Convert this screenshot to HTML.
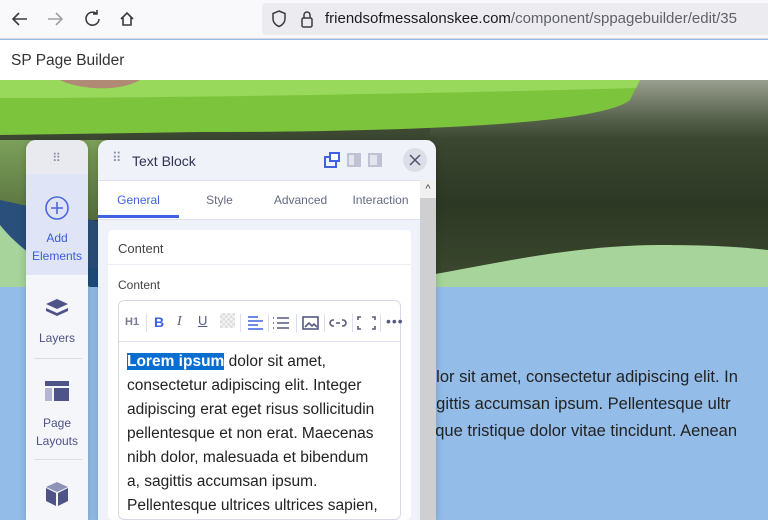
<!DOCTYPE html><html><head><style>
*{margin:0;padding:0;box-sizing:border-box}
body{width:768px;height:510px;overflow:hidden;position:relative;font-family:"Liberation Sans",sans-serif;background:#93bde8}
.abs{position:absolute}
</style></head><body>
<div class="abs" style="left:0;top:0;width:768px;height:39px;background:#f9f9fb;border-bottom:1px solid #d8d8dc"></div>
<svg class="abs" style="left:0;top:0" width="140" height="39" fill="none" stroke="#3b3b3f" stroke-width="1.6">
<path d="M27 19H13M19 13l-6 6 6 6"/>
<path d="M62 19H48M56 13l6 6-6 6" stroke="#a0a0a6"/>
<path d="M97 14a6.5 6.5 0 1 0 2 5M97 10v4h-4"/>
<path d="M121 19l6-6 6 6M123 17v8h8v-8"/>
</svg>
<div class="abs" style="left:262px;top:3px;width:506px;height:32px;background:#ececf0;border-radius:4px 0 0 4px"></div>
<svg class="abs" style="left:268px;top:8px" width="50" height="24" fill="none" stroke="#3b3b3f" stroke-width="1.5">
<path d="M11 3l6 2.5v5c0 4-3 7-6 8-3-1-6-4-6-8v-5z"/>
<rect x="34" y="10" width="10" height="9" rx="1.5"/><path d="M36 10V7a3 3 0 0 1 6 0v3"/>
</svg>
<div class="abs" style="left:325px;top:10px;font-size:15px;color:#1b1b1f">friendsofmessalonskee.com<span style="color:#60606a">/component/sppagebuilder/edit/35</span></div>
<div class="abs" style="left:0;top:40px;width:768px;height:40px;background:#fff"></div>
<div class="abs" style="left:11px;top:52px;font-size:15.5px;color:#333">SP Page Builder</div>
<!-- image -->
<div class="abs" style="left:0;top:80px;width:768px;height:207px;background:linear-gradient(180deg,#4a5540 0%,#3a4630 30%,#2c3823 60%,#3d4a30 100%)"></div>
<div class="abs" style="left:430px;top:80px;width:338px;height:60px;background:linear-gradient(180deg,#9aa08f,#5a6550 60%,#3a4530)"></div>
<div class="abs" style="left:0;top:140px;width:430px;height:80px;background:linear-gradient(180deg,#7ba05a,#58703f)"></div>
<svg class="abs" style="left:0;top:80px" width="768" height="60"><path d="M0 0H640L630 20C600 45 400 52 200 52L0 55Z" fill="#7cc43c"/><path d="M0 0H640L636 8C500 12 200 18 0 18Z" fill="#98d85a"/><path d="M60 0C80 10 120 12 140 0Z" fill="#b08a74"/></svg>
<svg class="abs" style="left:0;top:200px" width="768" height="87">
<path d="M0 0 L0 87 L768 87 L768 70 C620 65 520 75 400 87Z" fill="#2a4f7a"/>
<path d="M0 60 L0 87 L420 87 C330 80 200 80 90 68 Z" fill="#1e4e7a"/>
<path d="M0 25 L0 87 L90 87 C50 70 20 50 0 25Z" fill="#a6d49a"/>
<path d="M360 87 C470 70 560 45 660 45 C720 45 750 48 768 50 L768 87Z" fill="#a6d49a"/>
</svg>
<div class="abs" style="left:427px;top:364px;font-size:16.5px;line-height:27px;color:#222;white-space:nowrap">olor sit amet, consectetur adipiscing elit. In<br>agittis accumsan ipsum. Pellentesque ultr<br>sque tristique dolor vitae tincidunt. Aenean</div>
<!-- left sidebar -->
<div class="abs" style="left:26px;top:140px;width:62px;height:380px;background:#f5f6fa;border-radius:10px 10px 0 0;box-shadow:0 2px 8px rgba(0,0,0,.2)"></div>
<div class="abs" style="left:26px;top:140px;width:62px;height:34px;background:#e9eaf0;border-radius:10px 10px 0 0;color:#8a8ca0;text-align:center;font-size:12px;line-height:36px;letter-spacing:1px">⠿</div>
<div class="abs" style="left:26px;top:174px;width:62px;height:101px;background:#dfe5f7"></div>
<svg class="abs" style="left:44px;top:195px" width="26" height="26" fill="none" stroke="#4a67e0" stroke-width="1.6"><circle cx="13" cy="13" r="11"/><path d="M13 7v12M7 13h12"/></svg>
<div class="abs" style="left:26px;top:229px;width:62px;text-align:center;font-size:12px;line-height:18px;color:#3d5bd8">Add<br>Elements</div>
<svg class="abs" style="left:44px;top:297px" width="26" height="24" fill="#4e5388"><path d="M13 2l11 5-11 5-11-5z"/><path d="M2 11l11 5 11-5v3l-11 5-11-5z"/></svg>
<div class="abs" style="left:26px;top:331px;width:62px;text-align:center;font-size:12px;color:#4e5388">Layers</div>
<div class="abs" style="left:34px;top:358px;width:48px;height:1px;background:#dcdde5"></div>
<svg class="abs" style="left:45px;top:381px" width="24" height="20"><rect x="0" y="0" width="24" height="5" fill="#4e5388"/><rect x="0" y="7" width="7" height="13" fill="#b3b6cf"/><rect x="9" y="7" width="15" height="13" fill="#4e5388"/></svg>
<div class="abs" style="left:26px;top:414px;width:62px;text-align:center;font-size:12px;line-height:18px;color:#4e5388">Page<br>Layouts</div>
<div class="abs" style="left:34px;top:459px;width:48px;height:1px;background:#dcdde5"></div>
<svg class="abs" style="left:45px;top:481px" width="24" height="26"><path d="M12 1l11 5-11 5-11-5z" fill="#8e92b8"/><path d="M1 7l10 5v13L1 20z" fill="#4e5388"/><path d="M23 7l-10 5v13l10-5z" fill="#4e5388"/></svg>
<!-- panel -->
<div class="abs" style="left:98px;top:140px;width:338px;height:380px;background:#f0f2fa;border-radius:10px 10px 0 0;box-shadow:0 2px 8px rgba(0,0,0,.2)"></div>
<div class="abs" style="left:112px;top:150px;color:#8a8ca0;font-size:13px">⠿</div>
<div class="abs" style="left:132px;top:153px;font-size:14px;color:#2f3350">Text Block</div>
<svg class="abs" style="left:322px;top:151px" width="70" height="18"><rect x="3" y="6" width="11" height="10" fill="none" stroke="#3f63e0" stroke-width="2"/><rect x="7" y="1" width="11" height="10" fill="#3f63e0"/><rect x="9" y="3" width="7" height="6" fill="#fff"/><rect x="25" y="2" width="14" height="14" fill="#bfc2d4"/><rect x="27" y="4" width="5" height="10" fill="#e4e6ef"/><rect x="46" y="2" width="14" height="14" fill="#bfc2d4"/><rect x="48" y="4" width="7" height="10" fill="#e4e6ef"/></svg>
<div class="abs" style="left:403px;top:148px;width:24px;height:24px;border-radius:50%;background:#dcdee8"></div>
<svg class="abs" style="left:403px;top:148px" width="24" height="24" stroke="#4e5270" stroke-width="1.5"><path d="M7 7l10 10M17 7L7 17"/></svg>
<div class="abs" style="left:98px;top:180px;width:322px;height:40px;background:#fff;border-top:1px solid #dde0ec;border-bottom:1px solid #dde0ec"></div>
<div class="abs" style="left:98px;top:182px;width:81px;height:36px;border-bottom:3px solid #3f63e0"></div>
<div class="abs" style="left:98px;top:193px;width:322px;font-size:12px;color:#666a80;display:flex">
<span style="width:81px;text-align:center;color:#3f63e0">General</span><span style="width:81px;text-align:center">Style</span><span style="width:81px;text-align:center">Advanced</span><span style="width:79px;text-align:center">Interaction</span></div>
<div class="abs" style="left:420px;top:180px;width:16px;height:340px;background:#cfcfd2"></div>
<div class="abs" style="left:420px;top:180px;width:16px;height:18px;background:#f0f0f0;text-align:center;font-size:11px;color:#444;line-height:18px">^</div>
<div class="abs" style="left:108px;top:230px;width:303px;height:290px;background:#fff;border-radius:5px"></div>
<div class="abs" style="left:108px;top:264px;width:303px;height:1px;background:#eceef4"></div>
<div class="abs" style="left:118px;top:241px;font-size:13px;color:#444">Content</div>
<div class="abs" style="left:118px;top:278px;font-size:12px;color:#444">Content</div>
<div class="abs" style="left:118px;top:300px;width:283px;height:220px;border:1px solid #d6d8ea;border-radius:6px"></div>
<div class="abs" style="left:119px;top:341px;width:281px;height:1px;background:#dcdef0"></div>
<div class="abs" style="left:125px;top:316px;font-size:11px;color:#777b96;font-weight:bold">H1</div>
<div class="abs" style="left:154px;top:314px;font-size:14px;color:#3f63e0;font-weight:bold">B</div>
<div class="abs" style="left:177px;top:314px;font-size:14px;color:#555a80;font-style:italic;font-family:'Liberation Serif',serif">I</div>
<div class="abs" style="left:198px;top:313px;font-size:13px;color:#555a80;text-decoration:underline">U</div>
<div class="abs" style="left:220px;top:313px;width:15px;height:15px;background:repeating-conic-gradient(#ddd 0 25%,#f4f4f4 0 50%) 0 0/5px 5px"></div>
<svg class="abs" style="left:245px;top:314px" width="160" height="20" fill="none" stroke-width="1.6">
<path d="M3 3h10M3 7h15M3 11h10M3 15h15" stroke="#3f63e0"/>
<path d="M32 4h12M32 9h12M32 14h12M28 4h1M28 9h1M28 14h1" stroke="#555a80"/>
<rect x="58" y="3" width="15" height="12" stroke="#555a80"/><path d="M60 13l4-4 3 3 2-2 3 3" stroke="#555a80"/>
<path d="M91 9h4M89 6h-1a3 3 0 0 0 0 6h1M97 6h1a3 3 0 0 1 0 6h-1" stroke="#555a80"/>
<path d="M116 3h-3v3M127 3h3v3M116 15h-3v-3M127 15h3v-3" stroke="#555a80"/>
</svg>
<div class="abs" style="left:386px;top:313px;font-size:14px;color:#555a80;letter-spacing:1px">•••</div>
<div class="abs" style="left:146px;top:314px;width:1px;height:18px;background:#dcdef0"></div>
<div class="abs" style="left:240px;top:314px;width:1px;height:18px;background:#dcdef0"></div>
<div class="abs" style="left:268px;top:314px;width:1px;height:18px;background:#dcdef0"></div>
<div class="abs" style="left:296px;top:314px;width:1px;height:18px;background:#dcdef0"></div>
<div class="abs" style="left:324px;top:314px;width:1px;height:18px;background:#dcdef0"></div>
<div class="abs" style="left:352px;top:314px;width:1px;height:18px;background:#dcdef0"></div>
<div class="abs" style="left:380px;top:314px;width:1px;height:18px;background:#dcdef0"></div>
<div class="abs" style="left:127px;top:350px;font-size:15.5px;line-height:24px;color:#222;white-space:nowrap"><b style="background:#0a6ed1;color:#fff">Lorem ipsum</b> dolor sit amet,<br>consectetur adipiscing elit. Integer<br>adipiscing erat eget risus sollicitudin<br>pellentesque et non erat. Maecenas<br>nibh dolor, malesuada et bibendum<br>a, sagittis accumsan ipsum.<br>Pellentesque ultrices ultrices sapien,</div>
</body></html>
